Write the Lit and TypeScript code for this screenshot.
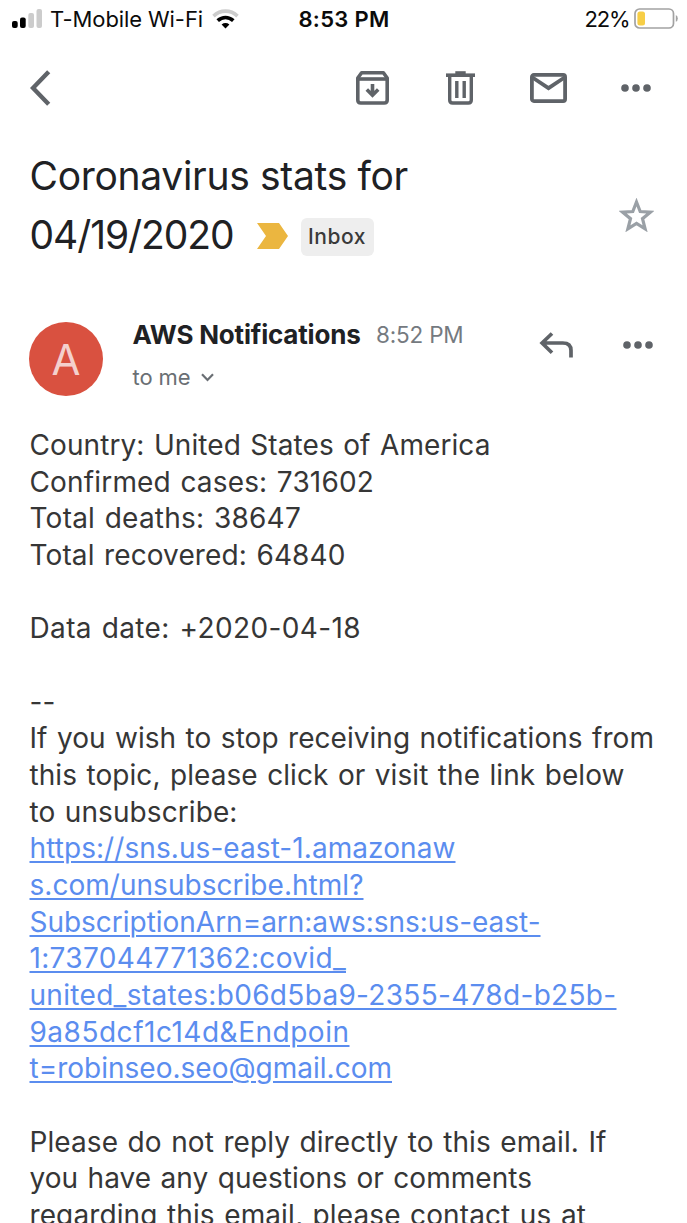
import { LitElement, html, css, svg } from "lit";
import { customElement, property } from "lit/decorators.js";

/** A single line of text tracked so that it fills the given width. */
@customElement("tracked-line")
class TrackedLine extends LitElement {
  @property({ type: Number }) width = 0;
  @property() text = "";
  @property({ type: Boolean }) link = false;

  static styles = css`
    :host { display: block; white-space: pre; }
    .run { display: inline-block; }
    .run.link { text-decoration: underline; text-decoration-thickness: 1.6px; text-underline-offset: 2.6px; }
  `;

  updated() {
    const run = this.renderRoot.querySelector(".run") as HTMLElement;
    run.style.letterSpacing = "0px";
    const natural = run.getBoundingClientRect().width;
    run.style.letterSpacing = `${(this.width - natural) / this.text.length}px`;
  }

  render() {
    return html`<span class=${this.link ? "run link" : "run"}>${this.text}</span>`;
  }
}

type Line = [string, number];

const STATS: Line[] = [
  ["Country: United States of America", 461],
  ["Confirmed cases: 731602", 344.5],
  ["Total deaths: 38647", 271.5],
  ["Total recovered: 64840", 316],
  ["", 0],
  ["Data date: +2020-04-18", 331.5],
  ["", 0],
  ["--", 26],
  ["If you wish to stop receiving notifications from", 624.5],
  ["this topic, please click or visit the link below", 595],
  ["to unsubscribe:", 208],
];
const LINK: Line[] = [
  ["https://sns.us-east-1.amazonaw", 426],
  ["s.com/unsubscribe.html?", 334],
  ["SubscriptionArn=arn:aws:sns:us-east-", 511],
  ["1:737044771362:covid_", 316.5],
  ["united_states:b06d5ba9-2355-478d-b25b-", 587],
  ["9a85dcf1c14d&Endpoin", 320],
  ["t=robinseo.seo@gmail.com", 362.5],
];
const FOOTER: Line[] = [
  ["", 0],
  ["Please do not reply directly to this email. If", 577],
  ["you have any questions or comments", 502.5],
  ["regarding this email, please contact us at", 556.5],
];

const dots = svg`<circle cx="4" cy="4" r="3.8"/><circle cx="15" cy="4" r="3.8"/><circle cx="26" cy="4" r="3.8"/>`;

@customElement("app-root")
class AppRoot extends LitElement {
  static styles = css`
    :host {
      display: block; width: 687px; height: 1223px; overflow: hidden;
      background: #fff; font-family: Inter, "Liberation Sans", sans-serif; color: #202124;
    }
    svg { display: block; flex: none; }
    .head { height: 427px; }
    .status { display: grid; grid-template-columns: 298.5px 286px 1fr; height: 38px; align-items: center; color: #0b0b0b; font-size: 22px; line-height: 38px; }
    .carrier { display: flex; align-items: center; padding-left: 12px; }
    .carrier tracked-line { margin-left: 8px; width: 161.5px; }
    .clock { font-weight: 600; }
    .power { display: flex; align-items: center; }
    .power tracked-line { width: 49.5px; }
    .toolbar { display: flex; height: 100px; align-items: center; padding-left: 29.5px; color: #5f6368; }
    .toolbar .box { margin-left: 305.5px; }
    .toolbar .bin { margin-left: 57px; }
    .toolbar .mail { margin-left: 55px; }
    .toolbar .more { margin-left: 54px; }
    .subject { display: flex; height: 145px; padding: 8px 0 0 29.5px; }
    .title { width: 589.5px; font-size: 39px; line-height: 59px; }
    .second { display: flex; align-items: center; height: 59px; }
    .second .digits { width: 227px; }
    .inbox { display: flex; align-items: center; margin: 4px 0 0 13px; width: 73px; height: 38px; border-radius: 6px; background: #eee; font-size: 21px; line-height: 39px; font-weight: 500; color: #3a3a3a; }
    .inbox tracked-line { margin-left: 7.5px; }
    .marker { margin-top: 3px; }
    .star { margin-top: 52px; }
    .sender { display: flex; height: 126px; padding-left: 29px; }
    .avatar { width: 74px; height: 74px; margin-top: 30.5px; border-radius: 50%; background: #d95140; color: #f4d0cd; font-size: 42px; line-height: 75px; text-align: center; }
    .who { width: 406px; margin-left: 29.5px; padding-top: 24.5px; }
    .from { display: flex; height: 38px; align-items: center; line-height: 38px; }
    .name { font-size: 26px; font-weight: 700; width: 243.5px; }
    .time { font-size: 22.5px; color: #757a7f; }
    .to { display: flex; align-items: center; height: 48px; font-size: 22px; line-height: 47px; color: #6a6f74; }
    .to svg { margin-left: 10px; }
    .reply { margin-top: 40.5px; color: #5f6368; }
    .more2 { margin: 49.5px 0 0 50px; color: #5f6368; }
    .body { padding-left: 29.5px; font-size: 28px; line-height: 36.67px; color: #363636; }
    .body tracked-line { height: 36.67px; word-spacing: 1.5px; }
    .link { color: #5b8def; }
  `;

  private lines(rows: Line[], link = false) {
    return rows.map(([t, w]) => t
      ? html`<tracked-line .text=${t} .width=${w} .link=${link}></tracked-line>`
      : html`<br>`);
  }

  render() {
    return html`
      <div class="head">
        <div class="status">
          <div class="carrier">
            <svg width="30" height="20" viewBox="0 0 30 20">
              <rect x="0" y="12" width="5.7" height="7" rx="2" fill="#000"/>
              <rect x="8" y="8.5" width="5.7" height="10.5" rx="2" fill="#000"/>
              <rect x="16.3" y="4" width="5.7" height="15" rx="2" fill="#ccc"/>
              <rect x="24.5" y="0" width="5.5" height="19" rx="2" fill="#ccc"/>
            </svg>
            <tracked-line .text=${"T-Mobile Wi-Fi"} .width=${153}></tracked-line>
            <svg width="27" height="20" viewBox="0 0 27 20" fill="none">
              <path d="M1.5 7.1C8.5.5 18.5.5 25.5 7.1" stroke="#ccc" stroke-width="3.6"/>
              <path d="M5.7 11.7c4.7-4.3 10.9-4.3 15.6 0" stroke="#000" stroke-width="3.7"/>
              <path d="M9.6 15.4c2.4-1.9 5.4-1.9 7.8 0l-3.9 4z" fill="#000"/>
            </svg>
          </div>
          <tracked-line class="clock" .text=${"8:53 PM"} .width=${91}></tracked-line>
          <div class="power">
            <tracked-line .text=${"22%"} .width=${45}></tracked-line>
            <svg width="45" height="22" viewBox="0 0 45 22">
              <rect x="1" y="1" width="38.5" height="19" rx="4.5" fill="#fff" stroke="#a2a2a2" stroke-width="1.7"/>
              <rect x="3.4" y="3.6" width="7.6" height="13.8" rx="2.5" fill="#f7ce46"/>
              <path d="M41.8 7q2 .8 2 3.4t-2 3.4z" fill="#a2a2a2"/>
            </svg>
          </div>
        </div>

        <div class="toolbar">
          <svg width="21" height="36" viewBox="0 0 21 36" fill="none" stroke="currentColor" stroke-width="4.4"><path d="M18.7 1.8 3 18l15.7 16.2"/></svg>
          <svg class="box" width="33" height="34" viewBox="0 0 33 34" fill="none" stroke="currentColor" stroke-width="3.6">
            <path d="M1.8 7v22q0 3 3 3h23.4q3 0 3-3V7l-3.8-5.2H5.6z" stroke-linejoin="round"/>
            <path d="M2 8h29"/>
            <path d="M16.5 13v11M10.8 18.5l5.7 5.7 5.7-5.7"/>
          </svg>
          <svg class="bin" width="29" height="34" viewBox="0 0 29 34" fill="none" stroke="currentColor" stroke-width="3.4">
            <path d="M0 4.2h29" stroke-width="3.6"/><path d="M9.3 1.8h10.4" stroke-width="3.2"/>
            <path d="M3.7 4v25q0 3 3 3h15.6q3 0 3-3V4M10.8 10v17M18.2 10v17"/>
          </svg>
          <svg class="mail" width="37" height="30" viewBox="0 0 37 30" fill="none" stroke="currentColor" stroke-width="3.8">
            <rect x="1.9" y="1.9" width="33.2" height="26.2" rx="2"/><path d="m2.5 4.5 16 10.6 16-10.6"/>
          </svg>
          <svg class="more" width="30" height="8" viewBox="0 0 30 8" fill="currentColor">${dots}</svg>
        </div>

        <div class="subject">
          <div class="title">
            <tracked-line .text=${"Coronavirus stats for"} .width=${378.5}></tracked-line>
            <div class="second">
              <tracked-line class="digits" .text=${"04/19/2020"} .width=${204}></tracked-line>
              <svg class="marker" width="31" height="26" viewBox="0 0 31 26"><path d="M0 0h22l9 13-9 13H0l9-13z" fill="#ebb640"/></svg>
              <div class="inbox"><tracked-line .text=${"Inbox"} .width=${58}></tracked-line></div>
            </div>
          </div>
          <svg class="star" width="35" height="34" viewBox="0 0 35 34" fill="none" stroke="#9aa0a6" stroke-width="3.2"><path d="m17.5 4 3.7 9.5 10.1.7-7.8 6.5 2.6 10.1-8.6-5.5-8.6 5.5 2.6-10.1-7.8-6.5 10.1-.7z"/></svg>
        </div>

        <div class="sender">
          <div class="avatar">A</div>
          <div class="who">
            <div class="from">
              <tracked-line class="name" .text=${"AWS Notifications"} .width=${228}></tracked-line>
              <tracked-line class="time" .text=${"8:52 PM"} .width=${87.5}></tracked-line>
            </div>
            <div class="to">
              <tracked-line .text=${"to me"} .width=${58}></tracked-line>
              <svg width="13" height="9" viewBox="0 0 13 9" fill="none" stroke="currentColor" stroke-width="2.2"><path d="m1 1.3 5.5 5.7L12 1.3"/></svg>
            </div>
          </div>
          <svg class="reply" width="34" height="26" viewBox="0 0 34 26" fill="none" stroke="currentColor" stroke-width="3.7"><path d="M13 1.5 3.1 11l9.9 9.7M3.5 11h20.3q8.2 0 8.2 7.5v7"/></svg>
          <svg class="more2" width="30" height="8" viewBox="0 0 30 8" fill="currentColor">${dots}</svg>
        </div>
      </div>

      <div class="body">
        <div>${this.lines(STATS)}</div>
        <div class="link">${this.lines(LINK, true)}</div>
        <div>${this.lines(FOOTER)}</div>
      </div>
    `;
  }
}
